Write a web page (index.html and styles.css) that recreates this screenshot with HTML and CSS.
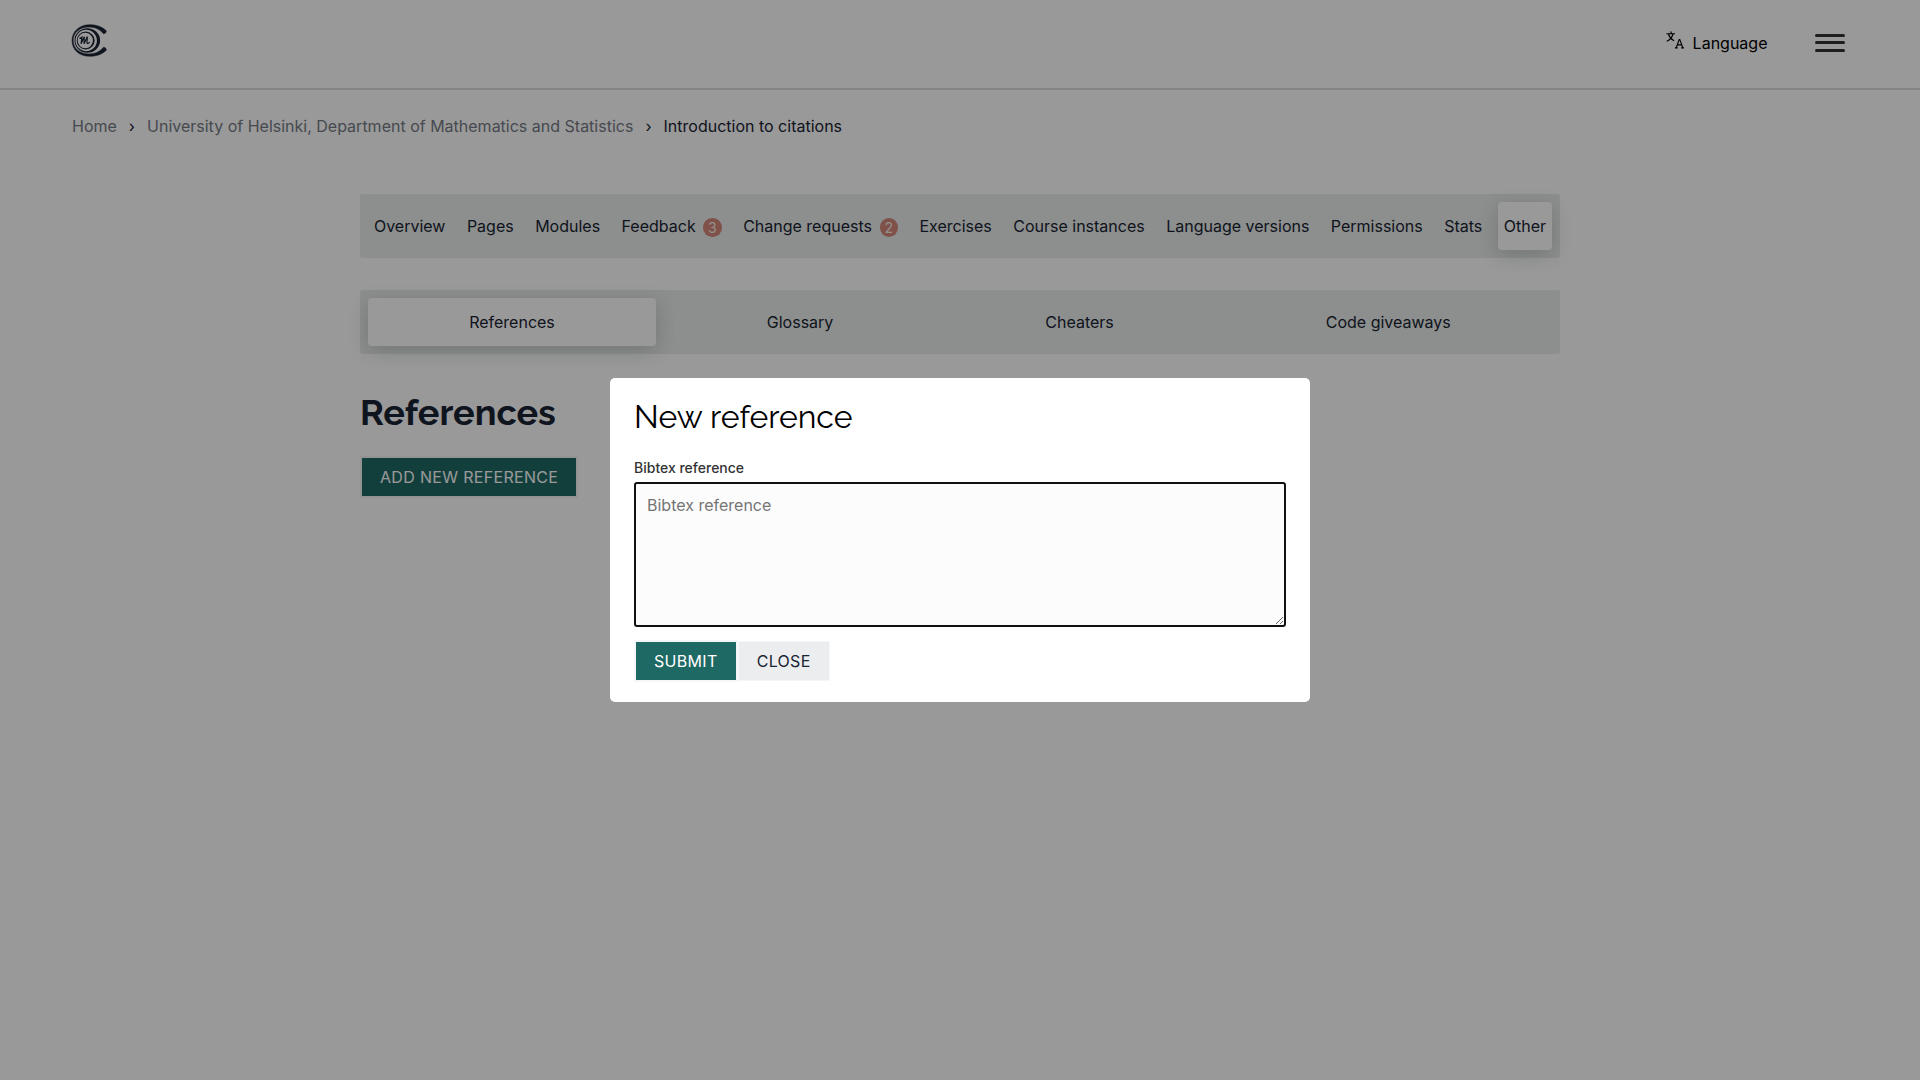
FILE: index.html
```html
<!DOCTYPE html>
<html lang="en">
<head>
<meta charset="utf-8">
<title>References</title>
<link rel="stylesheet" href="styles.css">
</head>
<body>
<header class="header">
  <svg class="logo" viewBox="0 0 36 34" fill="none" stroke="#1a2333">
    <path d="M35.300 6.800C31 2.500 25 .7 18.500.7C8 .7 1 8 1 16.500C1 25.500 8 32.300 18.500 32.300C25 32.300 31 30.500 35.300 26.200Q35.500 23.500 32.500 23.200C29 27.500 24.500 29.700 18.500 29.900C9 30.200 2.200 24.500 2.200 16.500C2.200 8.500 9 2.800 18.500 3.100C24.500 3.300 29 5.500 32.500 9.800Q35.500 9.500 35.300 6.800Z" fill="#1a2333" stroke-width=".5"/>
    <path fill-rule="evenodd" d="M3.500 16.500a12.800 12.200 0 1 0 25.600 0a12.800 12.200 0 1 0-25.600 0ZM4.500 16.500a10.700 10.700 0 1 1 21.400 0a10.700 10.700 0 1 1-21.400 0Z" fill="#1a2333" stroke="none"/>
    <path fill-rule="evenodd" d="M5.700 16.500a9 8.900 0 1 0 18 0a9 8.900 0 1 0-18 0ZM6.700 16.500a7.600 7.800 0 1 1 15.200 0a7.600 7.800 0 1 1-15.200 0Z" fill="#1a2333" stroke="none"/>
    <path d="M8.500 14.500L11 13.100L10 19.800L13.300 12.800L13 19.800L16.400 12.600L15.900 18.800Q16.500 20.500 18.800 18.200" stroke-width="1.200"/>
  </svg>
  <div class="header-actions">
    <button class="language">
      <svg class="language-icon" viewBox="0 0 18 18" fill="none" stroke="#000" stroke-width="1.100">
        <path d="M.5 2.800H9M4.700.4L5.600 2.700M2.400 3C3.400 6.300 5.600 8.400 8 9.900M7 3C6 6.700 4 8.700.8 10.300"/>
        <path d="M10.200 16.700L13.200 8.600H13.800L16.800 16.700M11.200 13.900H15.800M8.900 16.900H11.700M15.200 16.900H18"/>
      </svg>
      <span>Language</span>
    </button>
    <button class="menu" aria-label="Menu"><span></span><span></span><span></span></button>
  </div>
</header>
<nav class="breadcrumbs">
  <a>Home</a><span class="sep">›</span><a>University of Helsinki, Department of Mathematics and Statistics</a><span class="sep">›</span><span class="current">Introduction to citations</span>
</nav>
<main class="content">
  <nav class="tabs">
    <a class="tab">Overview</a>
    <a class="tab">Pages</a>
    <a class="tab">Modules</a>
    <a class="tab">Feedback<span class="badge">3</span></a>
    <a class="tab">Change requests<span class="badge">2</span></a>
    <a class="tab">Exercises</a>
    <a class="tab">Course instances</a>
    <a class="tab">Language versions</a>
    <a class="tab">Permissions</a>
    <a class="tab">Stats</a>
    <a class="tab active">Other</a>
  </nav>
  <nav class="tabs">
    <a class="tab active">References</a>
    <a class="tab">Glossary</a>
    <a class="tab">Cheaters</a>
    <a class="tab">Code giveaways</a>
  </nav>
  <h1 class="page-title">References</h1>
  <button class="button primary">Add new reference</button>
</main>
<div class="backdrop">
  <section class="dialog">
    <h2 class="dialog-title">New reference</h2>
    <label class="label" for="bibtex">Bibtex reference</label>
    <textarea class="textarea" id="bibtex" placeholder="Bibtex reference"></textarea>
    <div class="dialog-actions"><button class="button primary">Submit</button><button class="button secondary">Close</button></div>
  </section>
</div>
</body>
</html>
```
FILE: styles.css
```css
* { box-sizing: border-box; }
body { margin: 0; height: 1080px; overflow: hidden; background: #fff; font-family: Inter, sans-serif; font-size: 16px; color: #1a2333; }
button { font: inherit; border: 0; background: none; padding: 0; }
.header { height: 90px; border-bottom: 2px solid #dadada; padding: 0 75px 0 71px; display: flex; justify-content: space-between; align-items: center; }
.logo { width: 36px; height: 34px; margin-bottom: 6px; }
.header-actions { display: flex; align-items: center; gap: 47.5px; margin-bottom: 2px; }
.language { display: flex; align-items: center; gap: 9px; color: #000; line-height: 24px; }
.language-icon { width: 18px; height: 18px; margin-bottom: 6px; }
.menu { display: flex; flex-direction: column; gap: 4.5px; width: 30px; margin-bottom: 1px; }
.menu span { height: 3px; border-radius: 2px; background: #333; }
.breadcrumbs { height: 72px; padding-left: 72px; display: flex; align-items: center; white-space: pre; color: #767b85; }
.breadcrumbs .sep { width: 30.2px; text-align: center; color: #1a2333; }
.breadcrumbs .current { color: #1a2333; }
.content { width: 1200px; margin: 32px auto 0; }
.tabs { display: flex; gap: 9.6px; height: 64px; padding: 8px; margin-bottom: 32px; border-radius: 3px; background: #e9eeeb; }
.tab { flex: 1 1 auto; display: flex; justify-content: center; align-items: center; white-space: nowrap; border-radius: 4px; }
.tab.active { background: #fff; box-shadow: 0 5px 20px rgba(26, 35, 51, .2); }
.badge { width: 18.5px; height: 19px; margin: 2px 0 0 7.5px; border-radius: 50%; background: #d4877a; color: #f6efec; font-size: 14px; line-height: 19px; text-align: center; }
.page-title { margin: 36px 0 21px; font: 700 36px/45px Raleway, Lato, sans-serif; }
.button { height: 42px; padding: 0 18px; border: 2px solid #f5f6f7; text-transform: uppercase; letter-spacing: .32px; line-height: 38px; white-space: nowrap; }
.primary { background: #1f6964; color: #fff; }
.secondary { height: 40px; margin-top: 1px; border-width: 1px; background: #ebedee; color: #1a2333; }
.backdrop { position: absolute; inset: 0; display: flex; align-items: center; justify-content: center; background: rgba(0, 0, 0, .4); }
.dialog { width: 700px; height: 324px; padding: 18px 24px; border-radius: 5px; background: #fff; }
.dialog-title { margin: 0 0 20px; font: 400 32px/42px Raleway, Lato, sans-serif; color: #000; }
.label { display: block; font-size: 14px; font-weight: 500; line-height: 20px; color: #333; margin-bottom: 4px; }
.textarea { display: block; width: 652px; height: 145px; padding: 9px 11px; border: 2px solid #111; border-radius: 3px; outline: 0; background: #fcfcfc; font: 16px/24px Inter, sans-serif; }
.textarea::placeholder { color: #757575; }
.dialog-actions { display: flex; margin-top: 13px; }
```
